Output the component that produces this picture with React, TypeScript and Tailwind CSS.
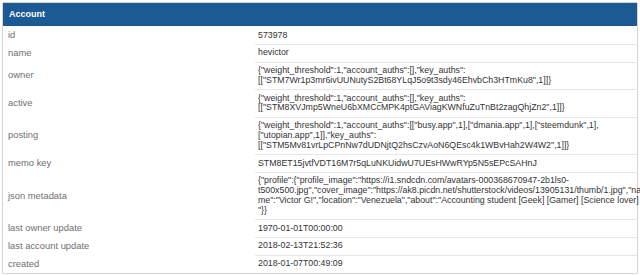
import React from "react";

const rows: { label: string; lines: string[] }[] = [
  { label: "id", lines: ["573978"] },
  { label: "name", lines: ["hevictor"] },
  {
    label: "owner",
    lines: [
      '{"weight_threshold":1,"account_auths":[],"key_auths":',
      '[["STM7Wr1p3mr6ivUUNutyS2Bt68YLqJ5o9t3sdy46EhvbCh3HTmKu8",1]]}',
    ],
  },
  {
    label: "active",
    lines: [
      '{"weight_threshold":1,"account_auths":[],"key_auths":',
      '[["STM8XVJmp5WneU6bXMCcMPK4ptGAViagKWNfuZuTnBt2zagQhjZn2",1]]}',
    ],
  },
  {
    label: "posting",
    lines: [
      '{"weight_threshold":1,"account_auths":[["busy.app",1],["dmania.app",1],["steemdunk",1],',
      '["utopian.app",1]],"key_auths":',
      '[["STM5Mv81vrLpCPnNw7dUDNjtQ2hsCzvAoN6QEsc4k1WBvHah2W4W2",1]]}',
    ],
  },
  { label: "memo key", lines: ["STM8ET15jvtfVDT16M7r5qLuNKUidwU7UEsHWwRYp5N5sEPcSAHnJ"] },
  {
    label: "json metadata",
    lines: [
      '{"profile":{"profile_image":"https://i1.sndcdn.com/avatars-000368670947-2b1ls0-',
      't500x500.jpg","cover_image":"https://ak8.picdn.net/shutterstock/videos/13905131/thumb/1.jpg","na',
      'me":"Victor G!","location":"Venezuela","about":"Accounting student [Geek] [Gamer] [Science lover]',
      '"}}',
    ],
  },
  { label: "last owner update", lines: ["1970-01-01T00:00:00"] },
  { label: "last account update", lines: ["2018-02-13T21:52:36"] },
  { label: "created", lines: ["2018-01-07T00:49:09"] },
];

export default function App() {
  return (
    <div
      className="w-[640px] h-[275px] bg-white overflow-hidden pt-[2px] px-[2px]"
      style={{ fontFamily: '"Liberation Sans", Arial, sans-serif' }}
    >
      <div className="border border-[#d4d4d4] rounded-t-[2px]">
        <div className="h-[23px] bg-[#1b5a92] flex items-center px-[6px] text-white font-bold text-[9px]">
          Account
        </div>
        {rows.map((r, i) => (
          <div key={r.label} className="flex">
            <div className="w-[252px] shrink-0 flex items-center pl-[5px] text-[9.4px] leading-[12px] text-[#6f6f6f]">
              {r.label}
            </div>
            <div
              className={
                "flex-1 min-w-0 px-[3px] py-[3.5px] text-[8.8px] leading-[9.8px] text-[#333] whitespace-nowrap " +
                (i === 0 ? "border-t border-transparent" : "border-t border-[#e6e6e6]")
              }
            >
              {r.lines.map((l, j) => (
                <div key={j}>{l}</div>
              ))}
            </div>
          </div>
        ))}
      </div>
    </div>
  );
}
